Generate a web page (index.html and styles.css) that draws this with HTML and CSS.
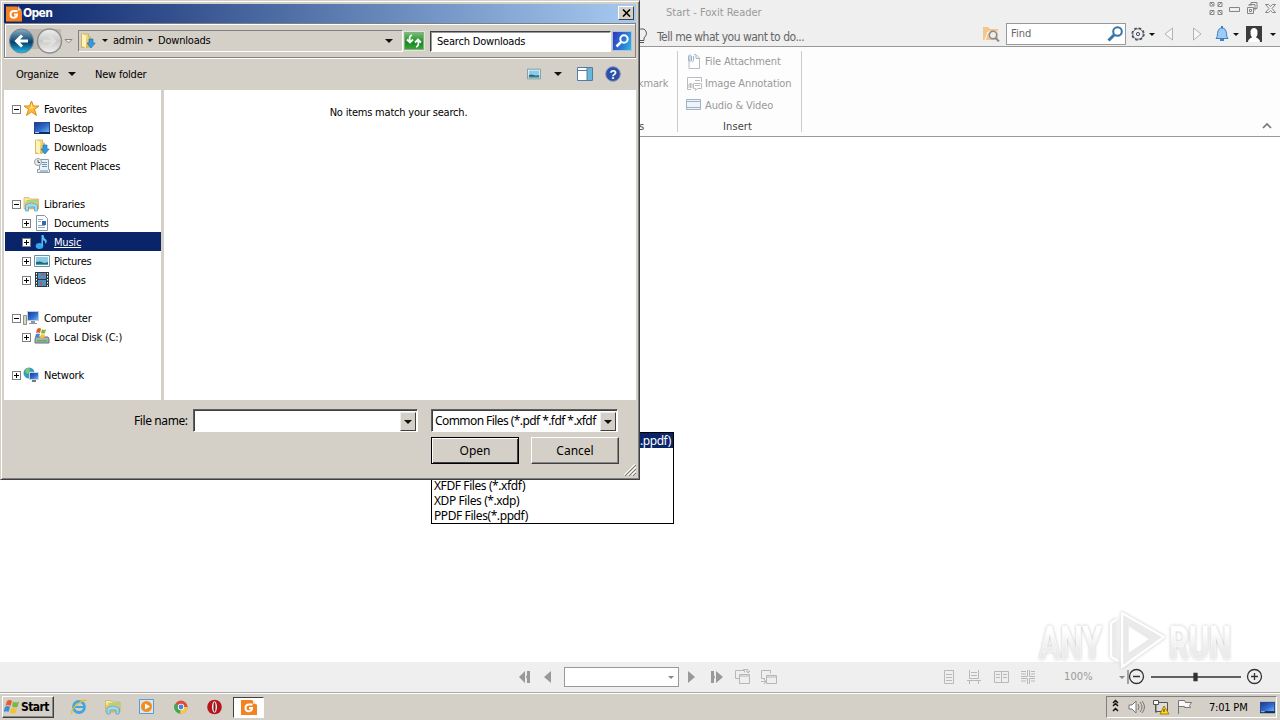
FILE: index.html
```html
<!DOCTYPE html>
<html lang="en">
<head>
<meta charset="utf-8">
<title>Start - Foxit Reader</title>
<link rel="stylesheet" href="styles.css">
</head>
<body>
<svg class="defs" width="0" height="0">
  <defs>
    <linearGradient id="blue" x1="0" y1="0" x2="1" y2="1"><stop offset="0" stop-color="#1c3c90"/><stop offset=".55" stop-color="#2f6bd0"/><stop offset="1" stop-color="#6db4f2"/></linearGradient>
    <linearGradient id="gold" x1="0" y1="0" x2="1" y2="1"><stop offset="0" stop-color="#fff3ae"/><stop offset="1" stop-color="#dcae3c"/></linearGradient>
    <linearGradient id="orb" x1="0" y1="0" x2="0" y2="1"><stop offset="0" stop-color="#8faec0"/><stop offset=".45" stop-color="#1d5580"/><stop offset=".55" stop-color="#083f6c"/><stop offset="1" stop-color="#22c0ee"/></linearGradient>
    <linearGradient id="orbgrey" x1="0" y1="0" x2="0" y2="1"><stop offset="0" stop-color="#efefed"/><stop offset=".5" stop-color="#c9c9c7"/><stop offset="1" stop-color="#f2f2f0"/></linearGradient>
    <linearGradient id="wm" x1="0" y1="0" x2="0" y2="1"><stop offset=".3" stop-color="#fff"/><stop offset=".6" stop-color="#ececec"/><stop offset="1" stop-color="#e2e2e2"/></linearGradient>
    <symbol id="foxit" viewBox="0 0 16 16"><path fill="#f58220" d="M0 1h11l5 5v10H0z"/><path fill="#fff" d="M12 0l4 5h-4z" opacity=".6"/><path fill="none" stroke="#fff" stroke-width="2" d="M11.500 5.500H8Q4.500 5.500 4.500 9T8 12.200Q11 12 11 9H8"/></symbol>
    <symbol id="dlfolder" viewBox="0 0 16 16"><path fill="url(#gold)" stroke="#c9a54a" stroke-width=".7" d="M1.500 1h7v3h2v10l-9 .5z"/><path fill="#fff2b5" d="M2 1l4 2v12l-4-2z"/><path fill="#2f9be4" stroke="#1867a8" stroke-width=".6" d="M9 6h4v4h2.200L11 15 7 10h2z"/></symbol>
    <symbol id="monitor" viewBox="0 0 16 16"><path fill="#264b8d" d="M0 2h16v12H0z"/><path fill="url(#blue)" d="M1 3h14v9H1z"/><path fill="#112c5d" d="M0 12h16v2H0z"/><path fill="#a8d4f5" d="M1 12h4v1H1z"/></symbol>
    <symbol id="picture" viewBox="0 0 16 16"><path fill="#f5fafc" stroke="#6b91a6" d="M.5 2.500h15v11H.5z"/><path fill="#8bcbe8" d="M2 4h12v5H2z"/><path fill="#21697c" d="M2 9q4-1 6 0t6 0v3H2z"/><path fill="#4da3a0" d="M2 11h12v1H2z"/></symbol>
    <symbol id="lib" viewBox="0 0 16 16"><path fill="url(#gold)" stroke="#c2a34b" stroke-width=".6" d="M.5 3V1.500h5L7 3h8v10H.5z"/><path fill="#a5d77d" d="M3 4h12v5H3z"/><path fill="#eac66b" d="M1 6h13v4H1z"/><path fill="#9fd9f3" stroke="#4c9ec6" stroke-width=".7" d="M2 9q6-4 12 0v6h-3v-4H5v4H2z"/></symbol>
  </defs>
</svg>

<div class="app">
  <header class="titlebar">
    <span class="app-title">Start - Foxit Reader</span>
    <svg class="win-icons" width="68" height="16" fill="none" stroke="#858585"><path d="M1 5V1.500h4M1.500 1.500l3 3M5 2v3H1M9 1.500h4v4H9zM9 5l4-4M1 9.500h4v4H1zM1 13l4-4M9 9.500h4v4H9zM9 9l4 4"/><path d="M20.500 6.500h10v4h-10z"/><path d="M42 5V1.500h6v6h-3M40 5V3.500h6v6M38.500 6.500h6v6h-6zM40.500 8.500h2v2h-2z"/><path d="M56.500 3.500h3l2 2 2-2h3l-3.500 4 3.500 4h-3l-2-2-2 2h-3l3.500-4z"/></svg>
  </header>
  <div class="toolbar">
    <svg class="bulb" width="14" height="18" fill="none" stroke="#555"><path d="M4.500 13.500v-3Q1 7 3 4t6-2q5 4 0 9v2.500zM5 15.500h4"/></svg>
    <span class="tell">Tell me what you want to do...</span>
    <svg class="find-folder" width="17" height="16"><path fill="#f3c78c" d="M0 1h5l2 2h8v11H0z"/><path d="M2 14l3-8h10" stroke="#fff" fill="none"/><circle cx="10" cy="9" r="3.700" fill="#eee" stroke="#8b8b8b" stroke-width="1.500"/><path d="M12.500 12l3.500 3.500" stroke="#8b8b8b" stroke-width="2"/></svg>
    <div class="find"><span>Find</span><svg width="17" height="16" fill="none" stroke="#3576a9"><circle cx="10.500" cy="5.500" r="4.300" stroke-width="2"/><path stroke-width="3" d="M7 9l-5.500 5.500"/></svg></div>
    <svg class="gear" width="14" height="14" fill="none" stroke="#444a58"><circle cx="7" cy="7" r="6" stroke-width="1.300" stroke-dasharray="2.700 2"/><circle cx="7" cy="7" r="5.200" stroke-width=".8"/><circle cx="7" cy="7" r="1.600"/></svg>
    <i class="caret gear-caret"></i>
    <svg class="history" width="38" height="14" fill="#f7f7f7" stroke="#b2b2b2"><path d="M8.500 1v12L1 7zM29.500 1v12L37 7z"/></svg>
    <svg class="bell" width="14" height="16"><path fill="#9dcbf2" stroke="#3b82c4" d="M1 12.500q1.500-1 1.500-5Q3 2 7 2t4.500 5.500q0 4 1.500 5z"/><path stroke="#3b82c4" stroke-width="2" d="M5 14h4M7 0v2"/></svg>
    <i class="caret bell-caret"></i>
    <svg class="user" width="16" height="16"><path fill="#3b3b3b" d="M0 0h16v16H0z"/><path fill="#fff" d="M2 16q0-3 4-4.500Q4 9 4.500 5q1-3 3.500-3t3.500 3q.5 4-1.500 6.500 4 1.500 4 4.500z"/></svg>
    <i class="caret user-caret"></i>
  </div>
  <div class="ribbon">
    <div class="links"><span class="mark">kmark</span><span class="links-cap">s</span></div>
    <div class="insert">
      <div class="cmd"><svg width="16" height="16" fill="none" stroke="#b5bdc7"><path d="M3 6v9.500h10.500V5L10 1.500H8"/><path stroke="#9fb4ca" d="M2.500 8V3q1-2.500 3 0v5q1 2 2-.5V3M4 9V3M10 2v3.500h3"/></svg><span>File Attachment</span></div>
      <div class="cmd"><svg width="16" height="16" fill="none" stroke="#bcbcbc"><path d="M5 14.500H1.500v-12h14V7M3 13V9h3v4M4.500 8v5M7.500 8.500h8v5h-4l-2 2v-2h-2zM9 10.500h5M9 5.500h5"/></svg><span>Image Annotation</span></div>
      <div class="cmd"><svg width="16" height="16" fill="none" stroke="#a3b2c8"><path fill="#eef3f9" d="M.5 2.500h14v10H.5zM.5 4.500h14M.5 10.500h14"/></svg><span>Audio &amp; Video</span></div>
      <div class="insert-cap">Insert</div>
    </div>
    <svg class="collapse" width="10" height="8" fill="none" stroke="#777" stroke-width="1.700"><path d="M1 6l4-4 4 4"/></svg>
  </div>
  <main class="page"></main>
  <footer class="status">
    <svg class="pager-l" width="36" height="14" fill="#999"><path d="M7 1v12L1 7zM9 1h3v12H9V9L8 7l1-2zM33 1v12l-7-6z"/></svg>
    <div class="page-box"><i class="caret grey"></i></div>
    <svg class="pager-r" width="36" height="14" fill="#999"><path d="M1 1v12l7-6zM24 1h3v4l1 2-1 2v4h-3zM29 1v12l7-6z"/></svg>
    <svg class="views" width="44" height="18" fill="none" stroke="#b4b8b8"><path d="M5 10.500H1.500v-8h9v2M5.500 6.500h10v9h-10zM6 8h9M9 1.500h5v3M12 3l2 2 2-2M31 10.500h-3.500v-8h9v3M32.500 7.500h10v8h-10zM27 13.500h5M30 11l2 2.500-2 2.500M33 9h9"/></svg>
    <svg class="layouts" width="92" height="16" fill="none" stroke="#b9b9b9"><path d="M1.500 1.500h9v13h-9zM3 5.500h6M3 8.500h6M3 11.500h6M26.500 1v8.500h9V1M24 11.500h14M26.500 15v-3.500h9V15M28 3.500h6M28 6.500h6M51.500 2.500h14v11h-14zM58.500 2v12M53 5.500h4M53 8.500h4M60 5.500h4M60 8.500h4M84.500 1v6.500H78M86.500 1v6.500H93M84.500 15v-5.500H78M86.500 15v-5.500H93M78 2.500h5M78 5h5M88 2.500h5M88 5h5M78 12h5M88 12h5"/></svg>
    <span class="zoom">100%</span>
    <i class="caret grey zoom-caret"></i>
    <svg class="slider" width="136" height="18" fill="none" stroke="#333" stroke-width="1.300"><path d="M1 2v14" stroke="#777"/><circle cx="9.500" cy="8.500" r="7"/><path d="M6 8.500h7M24 9h90M124 8.500h7M127.500 5v7"/><circle cx="127.500" cy="8.500" r="7"/><path fill="#333" d="M67 5.500h3v7h-3z"/></svg>
  </footer>
  <nav class="taskbar">
    <div class="start"><svg width="17" height="16"><path fill="#e65b28" d="M3 2q3-2 5 0L6.500 7q-3-2-5 0z"/><path fill="#78b944" d="M9 2.500q3 2 6 0L13.500 8q-3 1-5.500-.5z"/><path fill="#3a8ed4" d="M1 8q3-2 5 0l-1.500 5q-2-1.500-5 0z"/><path fill="#f5c12e" d="M7.500 8.500q3 2 5.500.5L11.500 14q-3 1-5.500-.5z"/></svg>Start</div>
    <svg class="quick" width="154" height="18">
      <g fill="none"><circle cx="9" cy="9" r="5.500" stroke="#42a5df" stroke-width="2.800"/><path stroke="#42a5df" stroke-width="2" d="M4 9h11"/><path stroke="#e6c039" stroke-width="1.500" d="M2 16Q0 12 8 6t8-3"/></g>
      <use href="#lib" x="35" y="1" width="16" height="16"/>
      <path fill="#d6e8f6" stroke="#5c9cce" d="M69.500 1.500h14v14h-14z"/><circle cx="76.500" cy="8.500" r="5.500" fill="#f38d20"/><path fill="#fff" d="M75 5.500v6l5-3z"/>
      <circle cx="111" cy="9" r="6.500" fill="#e14b3b"/><path fill="#3faa50" d="M111 9L105 5.700A6.500 6.500 0 0 0 110 15.500z"/><path fill="#f8cb3a" d="M111 9h6.500a6.500 6.500 0 0 1-7.500 6.500z"/><circle cx="111" cy="9" r="3.200" fill="#fff"/><circle cx="111" cy="9" r="2.400" fill="#4386d8"/>
      <circle cx="144.500" cy="9" r="7.300" fill="#b5151b"/><ellipse cx="144.500" cy="9" rx="2.500" ry="5.800" fill="#eee"/><ellipse cx="144.500" cy="9" rx="1" ry="4.700" fill="#86151a"/>
    </svg>
    <div class="task"><svg width="16" height="16"><use href="#foxit"/></svg></div>
    <div class="tray">
      <svg width="80" height="16" fill="none"><path stroke="#111" stroke-width="1.500" d="M1 4l2.500-2.500L6 4M1 7l2.500-2.500L6 7M1 12l2.500-2.500L6 12"/><path fill="#fff" stroke="#777" d="M17 6h3l4-4v12l-4-4h-3z"/><path stroke="#777" d="M26 5q2 3 0 6M28 3q4 5 0 10M30 2q5 6 0 12"/><path fill="#ddd" stroke="#555" d="M43.500 3.500h12v9h-12z"/><path fill="#fff" stroke="#555" d="M41.500 1.500h5v4h-5zM44 6v8"/><path fill="#ffda26" stroke="#a87c00" d="M52 7l5 8h-9z"/><path stroke="#222" d="M52 10v3"/><path fill="#f8f8f8" stroke="#777" d="M66.500 15V1.500h6l1 2h6l-2 3 1 2h-6v-1h-6"/></svg>
      <span class="clock">7:01 PM</span>
      <svg width="15" height="15"><use href="#monitor"/></svg>
    </div>
  </nav>
</div>

<div class="watermark">
  <svg width="220" height="76" viewBox="0 0 220 76">
    <g class="wm-text"><text x="5" y="55" textLength="63" lengthAdjust="spacingAndGlyphs">ANY</text><text x="135" y="55" textLength="62" lengthAdjust="spacingAndGlyphs">RUN</text></g>
    <g class="wm-mark"><path d="M83 15l-6 4v34l7 4"/><path d="M88 9v54l42-30z"/><path class="wm-in" d="M94 21v29l22-15z"/></g>
  </svg>
</div>

<div class="dropdown">
  <div class="opt chosen">.ppdf)</div><div class="opt"></div><div class="opt"></div>
  <div class="opt">XFDF Files (*.xfdf)</div><div class="opt">XDP Files (*.xdp)</div><div class="opt">PPDF Files(*.ppdf)</div>
</div>

<section class="dialog">
  <div class="d-title"><svg width="16" height="17"><use href="#foxit"/></svg><b>Open</b><span class="close"><svg width="9" height="8" stroke="#000" stroke-width="1.600"><path d="M1 .5l7 7M8 .5l-7 7"/></svg></span></div>
  <div class="nav">
    <svg class="orbs" width="66" height="28"><rect x="12" y="2" width="40" height="20" fill="#bdbab4"/><circle cx="12.500" cy="14" r="12" fill="url(#orb)" stroke="#6c8796"/><path fill="none" stroke="#fff" stroke-width="3" d="M19 14H8M13 8.500L7.500 14l5.500 5.500"/><circle cx="40.500" cy="14" r="12" fill="url(#orbgrey)" stroke="#8e8e8c" stroke-width="1.400"/><path fill="none" stroke="#dededb" stroke-width="3" d="M34 14h11M40 8.500l5.500 5.500-5.500 5.500"/><path fill="#eee" stroke="#858585" d="M56 12.500h7L59.500 16z"/></svg>
    <div class="address"><svg width="16" height="16"><use href="#dlfolder"/></svg><i class="caret small"></i><span class="crumb1">admin</span><i class="caret small"></i><span class="crumb2">Downloads</span><i class="caret big"></i></div>
    <div class="refresh"><svg width="16" height="14" fill="none" stroke="#fff" stroke-width="1.800"><path d="M6 1Q2.500 2 4 8M1 5.500l3 3 3-3M10 13q3.500-1 2-7M9 8.500l3-3 3 3"/></svg></div>
    <div class="search">Search Downloads</div>
    <div class="go"><svg width="16" height="16" fill="none" stroke="#fff"><circle cx="10" cy="6" r="3.700" stroke-width="2"/><path stroke-width="2.500" d="M7 9l-4.500 4.500"/></svg></div>
  </div>
  <div class="commands">
    <span class="organize">Organize</span><i class="caret big"></i><span class="newf">New folder</span>
    <svg class="view-ic" width="14" height="12" viewBox="0 2 16 12"><use href="#picture" width="16" height="16"/></svg>
    <i class="caret big view-caret"></i>
    <svg class="pane-ic" width="16" height="14"><path fill="#fff" stroke="#527ca5" d="M.5.5h15v13H.5z"/><path fill="#69b6d7" d="M10 1h5v12h-5z"/><path stroke="#527ca5" d="M1 3.500h9M10 1v12"/></svg>
    <svg class="help-ic" width="16" height="16"><circle cx="8" cy="8" r="7.300" fill="#2c4fa7" stroke="#8390b6"/><text x="8" y="12.500" text-anchor="middle">?</text></svg>
  </div>
  <div class="d-body">
    <div class="tree">
      <div class="row"><i class="box"></i><svg width="17" height="17"><path fill="#ffbd35" stroke="#d88e24" d="M8.500 1l2 5h5.500l-4.500 3.500 2 6-5-3.500-5 3.500 2-6L1 6h5.500z"/><path fill="#ffe392" d="M8.500 3l1 4h3L7 9z"/></svg><span>Favorites</span></div>
      <div class="row sub leaf"><svg width="16" height="16"><use href="#monitor"/></svg><span>Desktop</span></div>
      <div class="row sub leaf"><svg width="16" height="16"><use href="#dlfolder"/></svg><span>Downloads</span></div>
      <div class="row sub leaf wide"><svg width="16" height="16"><path fill="#eaf0f5" stroke="#8c9daa" d="M5.500 1.500h9v10h1v3H3.500v-3h2z"/><path stroke="#6498b8" d="M8 4.500h5M8 6.500h5M8 8.500h5M6 13h8"/><circle cx="4" cy="4" r="3.500" fill="#eee" stroke="#929da5"/><path fill="none" stroke="#555" d="M4 2v2.500h2"/></svg><span>Recent Places</span></div>
      <div class="row"></div>
      <div class="row"><i class="box"></i><svg width="17" height="16"><use href="#lib"/></svg><span>Libraries</span></div>
      <div class="row sub"><i class="box plus"></i><svg width="16" height="16"><path fill="#fff" stroke="#8294a8" d="M2.500.5h8l3 3v12h-11z"/><path stroke="#94abc4" d="M4 4.500h5M4 6.500h3M4 10.500h7M4 12.500h7"/><path fill="#356aa5" d="M8 6h4v4H8z"/></svg><span>Documents</span></div>
      <div class="row sub selected"><i class="box plus"></i><svg width="16" height="16"><ellipse cx="5.500" cy="12" rx="3.800" ry="3" fill="#38a6ea"/><path fill="#55bbf5" d="M7.500 1h2q0 3 3 5 1 2-1 4 0-3-2.500-4v6H7.500z"/></svg><u>Music</u></div>
      <div class="row sub"><i class="box plus"></i><svg width="16" height="16"><use href="#picture"/></svg><span>Pictures</span></div>
      <div class="row sub"><i class="box plus"></i><svg width="16" height="16"><path fill="#263c46" d="M1 0h14v15H1z"/><path fill="#4f8fc2" d="M4 1h8v6H4zM4 8h8v6H4z"/><path fill="#bd5358" d="M6 3l3-2 3 3zM5 11l3-2v5z"/><path stroke="#fff" stroke-dasharray="1.500 1.500" d="M2.500 1v14M13.500 1v14"/></svg><span>Videos</span></div>
      <div class="row"></div>
      <div class="row"><i class="box"></i><svg width="17" height="16"><path fill="#d5d9cd" stroke="#8b9382" d="M.5 5.500h3v9h-3z"/><path fill="#c4ccd7" d="M4 1h12v10H4z"/><path fill="url(#blue)" d="M5 2h10v8H5z"/><path fill="#8998a9" d="M8 11h4v2h2v1H6v-1h2z"/></svg><span>Computer</span></div>
      <div class="row sub wide"><i class="box plus"></i><svg width="16" height="17"><path fill="#a8b0b4" stroke="#687077" d="M1 11l1-2h12l1 2v4H1z"/><path fill="#56b75b" d="M3 12h10v1.500H3z"/><path fill="#e65b28" d="M3 1q3-2 4 0L6 5q-2-1-4 0z"/><path fill="#78b944" d="M8 1q2 2 4 0l-1 4q-2 1-4 0z"/><path fill="#3a8ed4" d="M2 6q2-1 4 0L5 9H1z"/><path fill="#f5c12e" d="M7 6q2 1 4 0l-1 4H6z"/></svg><span>Local Disk (C:)</span></div>
      <div class="row"></div>
      <div class="row"><i class="box plus"></i><svg width="17" height="16"><circle cx="6" cy="6" r="5.500" fill="#349bc3"/><path fill="#80c673" d="M2 3q4-4 5 0L5 7 3 6zM7 4l4 1-3 3z"/><path fill="#cbd3df" d="M6 5h10v8H6z"/><path fill="url(#blue)" d="M7 6h8v6H7z"/><path fill="#778" d="M9 13h4v2H9z"/></svg><span>Network</span></div>
    </div>
    <div class="list"><span>No items match your search.</span></div>
  </div>
  <div class="d-foot">
    <div class="fields"><label>File name:</label><div class="combo name"><span class="drop"><i class="caret"></i></span></div><div class="combo filter"><span class="ftext">Common Files (*.pdf *.fdf *.xfdf</span><span class="drop"><i class="caret"></i></span></div></div>
    <div class="buttons"><div class="btn default"><span>Open</span></div><div class="btn"><span>Cancel</span></div></div>
    <svg class="grip" width="12" height="12" stroke="#7d7a73" fill="none"><path d="M1 12L12 1M5 12l7-7M9 12l3-3"/><path stroke="#fff" d="M0 11L11 0M4 11l8-8M8 11l4-4"/></svg>
  </div>
</section>
</body>
</html>
```
FILE: styles.css
```css
* { box-sizing: border-box; }
body { margin: 0; width: 1280px; height: 720px; overflow: hidden; background: #fff; color: #000; font: 11px/14px "DejaVu Sans Condensed", "DejaVu Sans", sans-serif; font-stretch: condensed; white-space: nowrap; letter-spacing: -0.2px; }
svg { display: block; flex: none; }
.defs { position: absolute; }
.caret { flex: none; width: 0; height: 0; border: 3px solid transparent; border-top: 3px solid #111; border-bottom: 0; }
.caret.grey { border-top-color: #888; }
.caret.big { border-width: 4px 4px 0; }

.app { display: flex; flex-direction: column; height: 720px; }
.titlebar { height: 22px; display: flex; background: #efefef; color: #999; }
.app-title { margin: 6px 0 0 666px; width: 543px; letter-spacing: 0; }
.win-icons { margin-top: 1px; }
.toolbar { height: 25px; display: flex; align-items: center; background: #efefef; border-bottom: 1px solid #999; }
.bulb { margin-left: 635px; margin-top: 4px; }
.tell { margin: 5px 0 0 8px; width: 326px; color: #666; font-size: 12px; letter-spacing: -.5px; }
.find { margin-left: 6px; width: 120px; height: 22px; border: 1px solid #999; background: #fff; display: flex; justify-content: space-between; align-items: center; padding: 0 1px 0 4px; color: #666; letter-spacing: 0; }
.gear { margin-left: 5px; }
.gear-caret { margin-left: 4px; }
.history { margin-left: 9px; }
.bell { margin-left: 13px; }
.bell-caret { margin-left: 4px; }
.user { margin-left: 7px; }
.user-caret { margin-left: 8px; }
.ribbon { height: 90px; display: flex; background: #fdfdfd; border-bottom: 1px solid #999; color: #999; }
.links { width: 678px; height: 81px; margin-top: 4px; padding-left: 638px; border-right: 1px solid #ccc; display: flex; flex-direction: column; }
.mark { margin-top: 26px; }
.links-cap { margin: 29px 0 0 1px; color: #444; }
.insert { width: 124px; height: 81px; margin-top: 4px; padding-left: 8px; border-right: 1px solid #ccc; letter-spacing: -.13px; }
.cmd { height: 22px; display: flex; align-items: center; gap: 3px; padding-bottom: 2px; }
.cmd span { padding-top: 2px; }
.insert-cap { margin-top: 3px; padding-right: 12px; text-align: center; color: #444; letter-spacing: .1px; }
.collapse { margin: 75px 0 0 460px; }
.page { flex: 1; }
.status { height: 31px; display: flex; align-items: center; background: #efefef; border-bottom: 1px solid #aaa; }
.pager-l { margin-left: 518px; margin-right: 10px; }
.page-box { width: 115px; height: 20px; background: #fff; border: 1px solid #999; display: flex; align-items: center; justify-content: flex-end; padding-right: 4px; }
.pager-r { margin-left: 8px; }
.views { margin-left: 11px; }
.layouts { margin-left: 165px; }
.zoom { margin-left: 29px; width: 54px; color: #999; letter-spacing: .1px; }
.slider { margin-left: 2px; }
.zoom-caret { margin-left: 1px; }
.taskbar { height: 27px; display: flex; align-items: center; background: #d4cfc7; border-top: 1px solid #fff; }
.start { margin-left: 2px; width: 52px; height: 22px; display: flex; align-items: center; gap: 0; padding-left: 1px; font-weight: bold; font-size: 12px; letter-spacing: -.6px; border: 1px solid; border-color: #fff #404040 #404040 #fff; box-shadow: inset -1px -1px #888; }
.quick { margin-left: 16px; }
.task { margin-left: 9px; width: 31px; height: 21px; background: #fff; border: 1px solid; border-color: #404040 #fff #fff #404040; display: flex; justify-content: center; align-items: center; }
.tray { margin-left: 842px; width: 171px; height: 22px; border: 1px solid; border-color: #808080 #fff #fff #808080; display: flex; align-items: center; padding-left: 5px; }
.clock { margin-left: 17px; width: 51px; padding-top: 1px; }

.watermark { position: absolute; left: 1034px; top: 604px; }
.wm-text { font: bold 47px Roboto, sans-serif; fill: url(#wm); stroke: #fff; stroke-width: .4; }
.wm-mark { fill: #f3f3f3; fill-opacity: .7; stroke: #fff; stroke-width: 2.5; stroke-linejoin: round; }
.wm-mark .wm-in { fill: #fff; fill-opacity: 1; stroke: #e9e9e9; stroke-width: 1.5; }
.watermark svg { filter: drop-shadow(0 0 1.5px #bbb); opacity: .9; }

.dropdown { position: absolute; left: 431px; top: 432px; width: 243px; height: 92px; background: #fff; border: 1px solid #000; font: 12px/15px "Noto Sans", sans-serif; letter-spacing: -.41px; }
.opt { height: 15px; padding: 0 2px; }
.chosen { background: #0a246a; color: #fff; text-align: right; }

.dialog { position: absolute; left: 0; top: 0; width: 640px; height: 480px; padding: 3px; background: #d4cfc7; border: 1px solid; border-color: #d4cfc7 #404040 #404040 #d4cfc7; box-shadow: inset 1px 1px #fff, inset -1px -1px #808080; display: flex; flex-direction: column; }
.d-title { height: 19px; background: linear-gradient(90deg, #0a246a, #a6caf0); color: #fff; display: flex; align-items: center; padding-left: 2px; }
.d-title b { margin-left: 1px; padding-bottom: 1px; flex: 1; font-size: 12px; letter-spacing: -.7px; }
.close { width: 16px; height: 14px; margin-right: 2px; margin-bottom: 2px; background: #d4cfc7; border: 1px solid; border-color: #fff #404040 #404040 #fff; display: flex; align-items: center; justify-content: center; }
.nav { height: 35px; display: flex; align-items: center; border: 1px solid #808080; box-shadow: inset 1px 1px #fff, 0 1px #fff; padding: 1px 0 0 4px; }
.address { width: 325px; height: 22px; margin-left: 3px; border: 1px solid; border-color: #808080 #fff #fff #808080; display: flex; align-items: center; padding: 0 9px 1px 1px; }
.address .small { margin-left: 6px; }
.crumb1 { margin-left: 5px; width: 28px; }
.crumb2 { margin-left: 5px; flex: 1; }
.refresh { width: 22px; height: 20px; background: linear-gradient(#7bc477, #168b1c 60%, #3aac3c); border: 1px solid #d8ead4; outline: 1px solid #92a98e; outline-offset: -2px; display: grid; place-items: center; }
.search { margin-left: 5px; width: 181px; height: 21px; background: #fff; border: 1px solid; border-color: #404040 #fff #fff #404040; box-shadow: inset 1px 1px #999; padding: 3px 6px; }
.go { margin-left: 1px; width: 20px; height: 20px; border: 1px solid #a8c4e0; background: linear-gradient(110deg, #3037bd, #297bd7 60%, #31b7e7); display: grid; place-items: center; }
.commands { height: 32px; display: flex; align-items: center; padding-left: 12px; }
.organize { width: 47px; padding-top: 1px; }
.commands .big { margin-left: 5px; }
.newf { margin-left: 19px; width: 432px; padding-top: 1px; }
.commands .view-caret { margin-left: 13px; }
.pane-ic { margin-left: 15px; }
.help-ic { margin-left: 12px; }
.help-ic text { font: bold 12px "Liberation Sans", sans-serif; fill: #fff; }
.d-body { height: 310px; display: flex; }
.tree { width: 160px; padding-top: 9px; background: #fff; border-right: 3px solid #d4cfc7; }
.row { height: 19px; margin-left: 1px; padding-left: 7px; display: flex; align-items: center; }
.row span, .row u { padding-top: 2px; }
.row .box { margin-top: 1px; }
.row svg { margin: 0 4px 0 2px; }
.row.sub svg { margin-left: 3px; }
.row.sub { padding-left: 17px; }
.row.leaf { padding-left: 26px; }
.selected { background: #0a246a; color: #fff; }
.box { flex: none; width: 9px; height: 9px; border: 1px solid #808080; background: linear-gradient(#000, #000) center / 5px 1px no-repeat #fff; }
.plus { background: linear-gradient(#000, #000) center / 5px 1px no-repeat, linear-gradient(#000, #000) center / 1px 5px no-repeat, #fff; }
.list { flex: 1; background: #fff; padding: 16px 3px 0 0; text-align: center; }
.d-foot { flex: 1; padding-top: 9px; font: 12px/15px "Noto Sans", sans-serif; letter-spacing: -.4px; position: relative; }
.fields { display: flex; align-items: center; padding-left: 130px; }
.fields label { width: 59px; }
.combo { height: 23px; background: #fff; border: 1px solid; border-color: #606060 #fff #fff #606060; box-shadow: inset 1px 1px #404040; display: flex; justify-content: flex-end; padding: 2px 1px 1px 3px; }
.name { width: 225px; }
.filter { width: 187px; margin-left: 13px; }
.ftext { flex: 1; width: 0; overflow: hidden; line-height: 18px; letter-spacing: -.57px; }
.drop { flex: none; width: 16px; height: 19px; background: #d4cfc7; border: 1px solid; border-color: #eee #404040 #404040 #eee; display: grid; place-items: center; }
.drop .caret { border-width: 4px 4px 0; }
.buttons { display: flex; gap: 12px; padding: 5px 0 0 427px; }
.btn { width: 88px; height: 27px; border: 1px solid; border-color: #fff #404040 #404040 #fff; box-shadow: inset -1px -1px #888; display: grid; place-items: center; letter-spacing: 0; }
.default { border-color: #000; box-shadow: inset 1px 1px #fff, inset -1px -1px #404040; }
.grip { position: absolute; right: 0; bottom: 0; }
```
